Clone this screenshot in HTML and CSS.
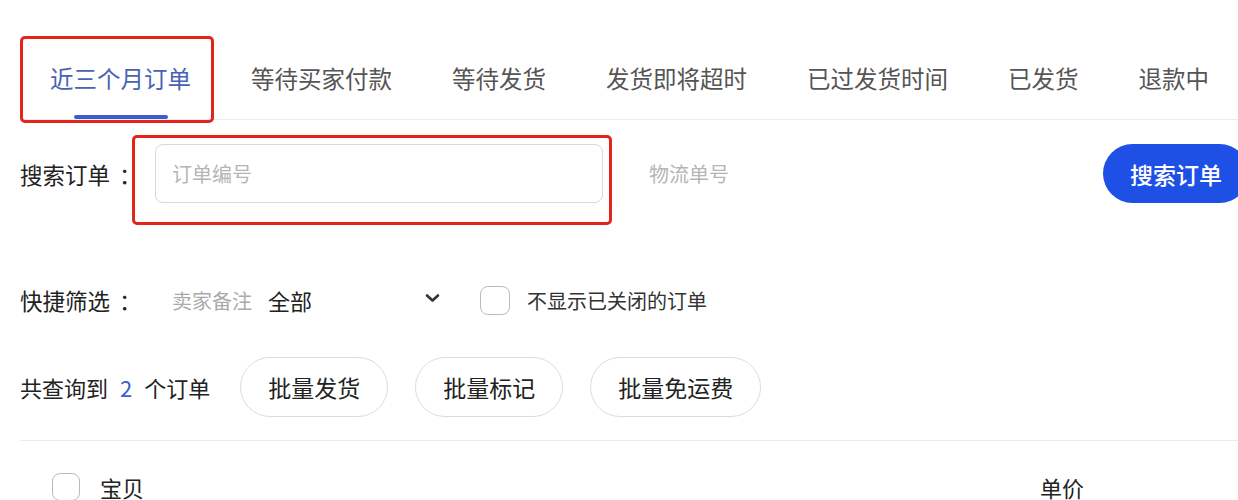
FILE: index.html
```html
<!DOCTYPE html>
<html lang="zh-CN">

<head>
    <meta charset="UTF-8">
    <meta name="viewport" content="width=device-width, initial-scale=1.0">
    <title>已卖出的宝贝</title>
    <link rel="stylesheet" href="styles.css">
</head>

<body>
    <div class="page">
        <div class="tabs">
            <div class="tab active">近三个月订单<span class="mark mark-tab"></span></div>
            <div class="tab">等待买家付款</div>
            <div class="tab">等待发货</div>
            <div class="tab">发货即将超时</div>
            <div class="tab">已过发货时间</div>
            <div class="tab">已发货</div>
            <div class="tab">退款中</div>
        </div>

        <div class="search-row">
            <span class="row-label search-label">搜索订单<span class="colon">：</span></span>
            <div class="input-wrap">
                <input class="text-input" type="text" placeholder="订单编号">
                <span class="mark mark-input"></span>
            </div>
            <input class="text-input plain" type="text" placeholder="物流单号">
            <button class="btn-primary">搜索订单</button>
        </div>

        <div class="filter-row">
            <span class="row-label filter-label">快捷筛选<span class="colon">：</span></span>
            <span class="filter-name">卖家备注</span>
            <div class="select">
                <span>全部</span>
                <svg width="15" height="10" viewBox="0 0 15 10">
                    <path d="M2 2.5 L7.5 7.5 L13 2.5" fill="none" stroke="#333" stroke-width="2.6" stroke-linecap="round" stroke-linejoin="round"/>
                </svg>
            </div>
            <label class="check-label">
                <span class="checkbox"></span>
                不显示已关闭的订单
            </label>
        </div>

        <div class="count-row">
            <span class="count-text">共查询到<span class="count-num">2</span>个订单</span>
            <button class="btn-round">批量发货</button>
            <button class="btn-round">批量标记</button>
            <button class="btn-round">批量免运费</button>
        </div>

        <div class="divider"></div>

        <div class="table-head">
            <div class="col-item">
                <span class="checkbox small"></span>
                <span>宝贝</span>
            </div>
            <div class="col-price">单价</div>
        </div>
    </div>
</body>

</html>
```

FILE: styles.css
```css
body {
    margin: 0;
    font-family: "Noto Sans CJK SC", "Noto Sans", sans-serif;
    color: #222;
    background: #fff;
    overflow: hidden;
}

.page {
    width: 1238px;
    padding-left: 20px;
    box-sizing: border-box;
    overflow: hidden;
}

.tabs {
    display: flex;
    border-bottom: 1px solid #ececec;
    width: 1300px;
}

.tab {
    position: relative;
    padding: 60px 30px 23px;
    line-height: 36px;
    font-size: 23.5px;
    color: #555;
    white-space: nowrap;
}

.tab.active {
    color: #4862b4;
}

.tab.active::after {
    content: "";
    position: absolute;
    left: 50%;
    bottom: 0;
    width: 94px;
    height: 4px;
    margin-left: -47px;
    border-radius: 2px;
    background-color: #3c5dd2;
}

.mark {
    position: absolute;
    border: 3px solid #e3241c;
    border-radius: 5px;
    pointer-events: none;
}

.mark-tab {
    left: 0;
    top: 36px;
    right: 7px;
    bottom: -4px;
}

.search-row {
    display: flex;
    align-items: center;
    margin-top: 24px;
    width: 1300px;
}

.row-label {
    font-size: 22.5px;
    color: #222;
    white-space: nowrap;
}

.colon {
    margin-left: 9px;
}

.search-label {
    width: 135px;
}

.input-wrap {
    position: relative;
}

.mark-input {
    left: -23px;
    top: -9px;
    right: -9px;
    bottom: -22px;
}

.text-input {
    display: block;
    width: 448px;
    height: 59px;
    box-sizing: border-box;
    padding: 0 16px;
    border: 1px solid #d9d9d9;
    border-radius: 8px;
    font-family: inherit;
    font-size: 20px;
    color: #333;
    outline: none;
}

.text-input::placeholder {
    color: #b5b5b5;
}

.text-input.plain {
    border-color: transparent;
    margin-left: 29px;
}

.btn-primary {
    height: 59px;
    margin-left: 23px;
    padding: 0 27px;
    border: none;
    border-radius: 30px;
    background-color: #1f50e6;
    color: #fff;
    font-family: inherit;
    font-size: 23px;
    font-weight: 500;
    white-space: nowrap;
}

.filter-row {
    display: flex;
    align-items: center;
    height: 30px;
    margin-top: 82px;
}

.filter-label {
    width: 152px;
}

.filter-name {
    width: 96px;
    font-size: 20px;
    color: #aaa;
}

.select {
    display: flex;
    justify-content: space-between;
    align-items: center;
    width: 172px;
    font-size: 22px;
    color: #222;
}

.select svg {
    margin-top: -4px;
}

.check-label {
    display: flex;
    align-items: center;
    margin-left: 40px;
    font-size: 20px;
    color: #333;
}

.checkbox {
    display: inline-block;
    width: 30px;
    height: 29px;
    margin-right: 17px;
    box-sizing: border-box;
    border: 1.5px solid #bbb;
    border-radius: 8px;
}

.count-row {
    display: flex;
    align-items: center;
    gap: 27px;
    margin-top: 42px;
}

.count-text {
    font-size: 22px;
    margin-right: 3px;
}

.count-num {
    margin: 0 12px;
    color: #3c5dd2;
}

.btn-round {
    height: 60px;
    padding: 0 27px;
    border: 1px solid #dcdcdc;
    border-radius: 30px;
    background: #fff;
    color: #222;
    font-family: inherit;
    font-size: 23px;
    white-space: nowrap;
}

.divider {
    height: 1px;
    margin-top: 23px;
    background-color: #ebebeb;
}

.table-head {
    display: flex;
    align-items: center;
    margin-top: 30px;
    padding-left: 32px;
    font-size: 22px;
}

.col-item {
    display: flex;
    align-items: center;
    width: 988px;
}

.checkbox.small {
    width: 28px;
    height: 28px;
    margin-right: 20px;
}
```
